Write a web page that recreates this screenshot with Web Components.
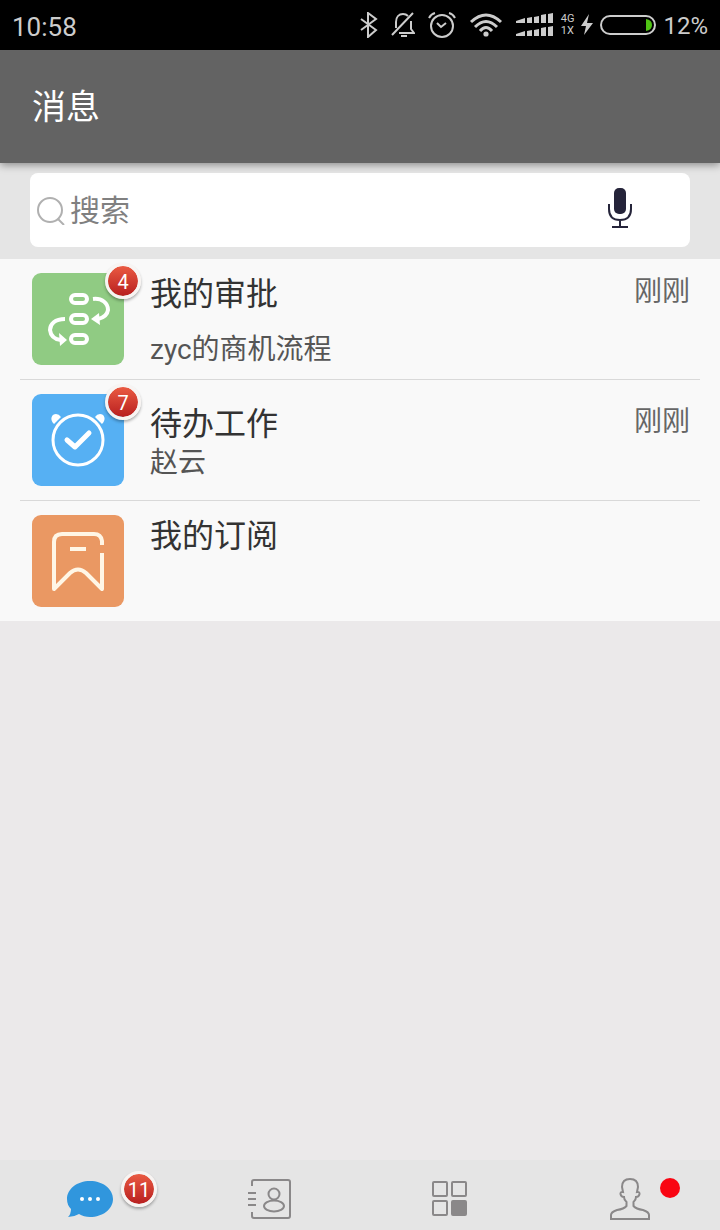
<!DOCTYPE html>
<html lang="zh-CN">
<head>
<meta charset="utf-8">
<meta name="viewport" content="width=device-width, initial-scale=1">
<title>消息</title>
<style>
  body {
    margin: 0;
    background: #ebe9ea;
    font-family: Roboto, "Noto Sans CJK SC", sans-serif;
  }
</style>
</head>
<body>
<message-app></message-app>

<script>
const ICONS = {
  bluetooth: {
    box: [18, 26],
    body: '<path d="M1 7L16 18L8 25V1L16 7L1 18" fill="none" stroke="currentColor" stroke-width="2"/>',
  },
  mute: {
    box: [24, 26],
    body: `<g fill="none" stroke="currentColor" stroke-width="2">
      <path d="M22 1L1 23M5 16V10C5 5 8 2 12 2C14 2 15 2 17 4M20 9V17L23 21H8M10 24H16"/></g>`,
  },
  alarm: {
    box: [28, 28],
    body: `<g fill="none" stroke="currentColor" stroke-width="2">
      <circle cx="14" cy="15" r="11"/><path d="M9 12L13 16L18 12M1 7Q3 3 7 2M21 2Q25 3 27 7"/></g>`,
  },
  wifi: {
    box: [34, 26],
    body: `<g fill="none" stroke="currentColor" stroke-width="3">
      <path d="M2 10Q17-4 32 10M6 15Q17 4 28 15M11 19Q17 12 23 19"/></g>
      <circle cx="17" cy="22" r="2.6" fill="currentColor"/>`,
  },
  signal: {
    box: [38, 24],
    body: `<g fill="currentColor">
      <path d="M0 8L9 5V10H0ZM11 5L16 4V10H11ZM18 4L23 3V10H18ZM25 2L30 1V10H25ZM32 1L37 0V10H32Z"/>
      <path d="M0 21L9 18V23H0ZM11 18L16 17V23H11ZM18 17L23 16V23H18ZM25 15L30 14V23H25ZM32 14L37 13V23H32Z"/></g>`,
  },
  bolt: {
    box: [12, 22],
    body: '<path d="M8 0L0 12H5L3 21L12 9H6Z" fill="currentColor"/>',
  },
  battery: {
    box: [56, 20],
    body: `<rect x="1" y="1" width="54" height="18" rx="9" fill="none" stroke="currentColor" stroke-width="2"/>
      <path d="M46 4Q52 5 52 10T46 16Z" fill="#4fc414"/>`,
  },
  search: {
    box: [30, 30],
    body: '<g fill="none" stroke="#b0b0b0" stroke-width="2"><circle cx="14" cy="15" r="12"/><path d="M22 24L28 30"/></g>',
  },
  mic: {
    box: [32, 44],
    body: `<rect x="10" y="0" width="12" height="26" rx="5" fill="#25243a"/>
      <path d="M5 16V21C5 28 9 32 16 32S27 28 27 21V16M16 32V39M8 39H24" fill="none" stroke="#25243a" stroke-width="2"/>`,
  },
  approve: {
    box: [92, 92],
    body: `<g fill="none" stroke="#fff" stroke-width="4">
      <rect x="39" y="22" width="16" height="8" rx="4"/>
      <rect x="39" y="42" width="16" height="8" rx="4"/>
      <rect x="39" y="62" width="16" height="8" rx="4"/>
      <path d="M61 26C70 25 76 30 76 37Q75 44 66 46"/>
      <path d="M33 46C23 46 18 51 18 57Q19 66 29 67"/></g>
      <path d="M59 46L67 40L68 52ZM35 67L27 60L28 73Z" fill="#fff"/>`,
  },
  todo: {
    box: [92, 92],
    body: `<circle cx="46" cy="46" r="25" fill="none" stroke="#fff" stroke-width="3"/>
      <path d="M35 46L43 53L57 39" fill="none" stroke="#fff" stroke-width="5" stroke-linecap="round" stroke-linejoin="round"/>
      <path d="M22 30C17 25 20 20 24 20Q27 20 29 23ZM70 30C75 25 72 20 68 20Q65 20 63 23Z" fill="#fff"/>`,
  },
  bookmark: {
    box: [92, 92],
    body: `<path d="M70 30V26Q69 19 62 19H30Q22 19 22 27V74L38 58Q46 51 54 58L70 74V38M38 34H54" fill="none"
      stroke="#fff6e6" stroke-width="4" stroke-linejoin="round"/>`,
  },
  chat: {
    box: [48, 48],
    body: `<path d="M24 6C37 6 47 14 47 24S37 42 24 42C20 42 16 41 13 39Q8 42 2 42Q5 39 5 34Q1 30 1 24C1 14 11 6 24 6Z" fill="#3096dd"/>
      <g fill="#fff"><circle cx="16" cy="24" r="2"/><circle cx="24" cy="24" r="2"/><circle cx="32" cy="24" r="2"/></g>`,
  },
  contacts: {
    box: [48, 48],
    body: `<g fill="none" stroke="#8a8889" stroke-width="2">
      <path d="M6 11V7Q6 5 8 5H42Q44 5 44 7V41Q44 43 42 43H8Q6 43 6 41V37M2 18H10M2 24H10M2 30H10"/>
      <circle cx="28" cy="19" r="5.5"/><ellipse cx="28" cy="31" rx="10" ry="5.5"/></g>`,
  },
  apps: {
    box: [48, 48],
    body: `<g fill="none" stroke="#8a8889" stroke-width="2">
      <rect x="7" y="7" width="14" height="14" rx="1"/><rect x="26" y="7" width="14" height="14" rx="1"/>
      <rect x="7" y="26" width="14" height="14" rx="1"/><rect x="26" y="26" width="14" height="14" rx="1" fill="#8a8889"/></g>`,
  },
  me: {
    box: [48, 48],
    body: `<path d="M24 4C18 4 16 7 16 12L17 17C13 16 14 22 18 22Q18 25 20.5 27V31Q18 34 11 35Q5 37 5 40V44H43V40Q43 37 37 35
      Q30 34 27.5 31V27Q30 25 30 22C34 22 35 16 31 17L32 12C32 7 30 4 24 4Z" fill="none" stroke="#8a8889" stroke-width="2"/>`,
  },
};

class AppIcon extends HTMLElement {
  constructor() {
    super();
    this.attachShadow({ mode: 'open' });
  }

  connectedCallback() {
    const icon = ICONS[this.getAttribute('name')];
    if (!icon) return;
    const [width, height] = icon.box;
    this.shadowRoot.innerHTML = `
      <style>
        :host { display: block; flex: none; line-height: 0; }
        svg { display: block; }
      </style>
      <svg width="${width}" height="${height}" viewBox="0 0 ${width} ${height}" aria-hidden="true">${icon.body}</svg>
    `;
  }
}

class CountBadge extends HTMLElement {
  constructor() {
    super();
    this.attachShadow({ mode: 'open' }).innerHTML = `
      <style>
        :host {
          display: block;
          box-sizing: border-box;
          width: 36px;
          height: 36px;
          border: 3px solid #f8f4f2;
          border-radius: 50%;
          background: linear-gradient(#ea5a42, #b81f1f) padding-box;
          box-shadow: 0 2px 3px rgba(0, 0, 0, .3);
          color: #fff;
          font-size: 20px;
          line-height: 32px;
          text-align: center;
        }
      </style>
      <slot></slot>
    `;
  }
}

class StatusBar extends HTMLElement {
  constructor() {
    super();
    this.attachShadow({ mode: 'open' }).innerHTML = `
      <style>
        :host {
          display: flex;
          align-items: center;
          justify-content: space-between;
          height: 50px;
          padding: 0 12px;
          background: #000;
          color: #ccc;
        }
        .time { font-size: 26px; line-height: 30px; padding-top: 4px; }
        .icons, .power { display: flex; align-items: center; }
        .icons { gap: 13px; }
        .power { gap: 7px; }
        .net { font-size: 11px; line-height: 12px; }
        .net span { display: block; }
        .percent { font-size: 24px; line-height: 28px; padding-top: 2px; }
      </style>
      <div class="time">10:58</div>
      <div class="icons">
        <app-icon name="bluetooth"></app-icon>
        <app-icon name="mute"></app-icon>
        <app-icon name="alarm"></app-icon>
        <app-icon name="wifi"></app-icon>
        <div class="power">
          <app-icon name="signal"></app-icon>
          <div class="net"><span>4G</span><span>1X</span></div>
          <app-icon name="bolt"></app-icon>
          <app-icon name="battery"></app-icon>
          <div class="percent">12%</div>
        </div>
      </div>
    `;
  }
}

class TitleBar extends HTMLElement {
  constructor() {
    super();
    this.attachShadow({ mode: 'open' }).innerHTML = `
      <style>
        :host {
          display: flex;
          align-items: center;
          position: relative;
          height: 113px;
          padding: 0 32px;
          background: #636363;
          box-shadow: 0 2px 8px rgba(0, 0, 0, .4);
          color: #fff;
        }
        h1 { margin: 0; font-size: 34px; font-weight: 400; line-height: 48px; }
      </style>
      <h1><slot></slot></h1>
    `;
  }
}

class SearchBox extends HTMLElement {
  constructor() {
    super();
    this.attachShadow({ mode: 'open' }).innerHTML = `
      <style>
        :host { display: block; padding: 10px 30px 12px; background: #e5e5e5; }
        form {
          display: flex;
          align-items: center;
          gap: 4px;
          height: 74px;
          padding: 0 54px 0 6px;
          border-radius: 8px;
          background: #fff;
        }
        input {
          flex: 1;
          min-width: 0;
          height: 48px;
          padding: 0;
          border: 0;
          outline: 0;
          background: none;
          color: #333;
          font: inherit;
          font-size: 30px;
        }
        input::placeholder { color: #808080; opacity: 1; }
        button { padding: 0; border: 0; background: none; }
      </style>
      <form>
        <label for="q" aria-label="搜索"><app-icon name="search"></app-icon></label>
        <input id="q" type="text" placeholder="搜索">
        <button type="button" aria-label="语音"><app-icon name="mic"></app-icon></button>
      </form>
    `;
  }
}

class MessageItem extends HTMLElement {
  constructor() {
    super();
    this.attachShadow({ mode: 'open' });
  }

  connectedCallback() {
    const count = this.getAttribute('count');
    this.shadowRoot.innerHTML = `
      <style>
        :host { display: block; background: #f9f9f9; }
        :host(:not(:last-of-type))::after {
          content: "";
          display: block;
          height: 1px;
          margin: 0 20px;
          background: #d9d9d9;
        }
        .row { display: flex; gap: 26px; height: 120px; padding: 0 30px 0 32px; box-sizing: border-box; }
        .tile {
          position: relative;
          align-self: center;
          border-radius: 9px;
          background: var(--tile);
        }
        count-badge { position: absolute; top: -10px; right: -17px; }
        .text {
          display: flex;
          flex: 1;
          flex-direction: column;
          justify-content: var(--spread, space-between);
          min-width: 0;
          padding: 13px 0 12px;
        }
        .head { display: flex; align-items: flex-start; justify-content: space-between; }
        h2 { margin: 0; color: #333; font-size: 32px; font-weight: 400; line-height: 44px; }
        .time { color: #666; font-size: 28px; line-height: 40px; }
        .sub { color: #555; font-size: 28px; line-height: 34px; }
      </style>
      <div class="row">
        <div class="tile">
          <app-icon name="${this.getAttribute('icon')}"></app-icon>
          ${count ? `<count-badge>${count}</count-badge>` : ''}
        </div>
        <div class="text">
          <div class="head">
            <h2><slot></slot></h2>
            <div class="time"><slot name="time"></slot></div>
          </div>
          <div class="sub"><slot name="sub"></slot></div>
        </div>
      </div>
    `;
  }
}

class TabItem extends HTMLElement {
  constructor() {
    super();
    this.attachShadow({ mode: 'open' });
  }

  connectedCallback() {
    const count = this.getAttribute('count');
    this.shadowRoot.innerHTML = `
      <style>
        :host { display: flex; flex: 1; justify-content: center; align-items: center; }
        a { display: block; position: relative; }
        count-badge { position: absolute; top: -4px; left: 55px; }
        .dot {
          position: absolute;
          top: 3px;
          left: 54px;
          width: 20px;
          height: 20px;
          border-radius: 50%;
          background: #f90512;
        }
      </style>
      <a href="#${this.getAttribute('icon')}" aria-label="${this.getAttribute('label')}">
        <app-icon name="${this.getAttribute('icon')}"></app-icon>
        ${count ? `<count-badge>${count}</count-badge>` : ''}
        ${this.hasAttribute('dot') ? '<span class="dot"></span>' : ''}
      </a>
    `;
  }
}

class TabBar extends HTMLElement {
  constructor() {
    super();
    this.attachShadow({ mode: 'open' }).innerHTML = `
      <style>
        :host { display: block; background: #e5e5e5; }
        nav { display: flex; box-sizing: border-box; height: 70px; padding-top: 8px; }
      </style>
      <nav><slot></slot></nav>
    `;
  }
}

class MessageApp extends HTMLElement {
  constructor() {
    super();
    this.attachShadow({ mode: 'open' }).innerHTML = `
      <style>
        :host { display: flex; flex-direction: column; min-height: 100vh; }
        main { flex: 1; }
        .approve { --tile: #90cb83; }
        .todo { --tile: #56b0f3; --spread: center; }
        .bookmark { --tile: #ea9863; }
      </style>
      <status-bar></status-bar>
      <title-bar>消息</title-bar>
      <main>
        <search-box></search-box>
        <message-item class="approve" icon="approve" count="4">
          我的审批<span slot="time">刚刚</span><span slot="sub">zyc的商机流程</span>
        </message-item>
        <message-item class="todo" icon="todo" count="7">
          待办工作<span slot="time">刚刚</span><span slot="sub">赵云</span>
        </message-item>
        <message-item class="bookmark" icon="bookmark">我的订阅</message-item>
      </main>
      <tab-bar>
        <tab-item icon="chat" label="消息" count="11"></tab-item>
        <tab-item icon="contacts" label="通讯录"></tab-item>
        <tab-item icon="apps" label="应用"></tab-item>
        <tab-item icon="me" label="我" dot></tab-item>
      </tab-bar>
    `;
  }
}

customElements.define('app-icon', AppIcon);
customElements.define('count-badge', CountBadge);
customElements.define('status-bar', StatusBar);
customElements.define('title-bar', TitleBar);
customElements.define('search-box', SearchBox);
customElements.define('message-item', MessageItem);
customElements.define('tab-item', TabItem);
customElements.define('tab-bar', TabBar);
customElements.define('message-app', MessageApp);
</script>
</body>
</html>
